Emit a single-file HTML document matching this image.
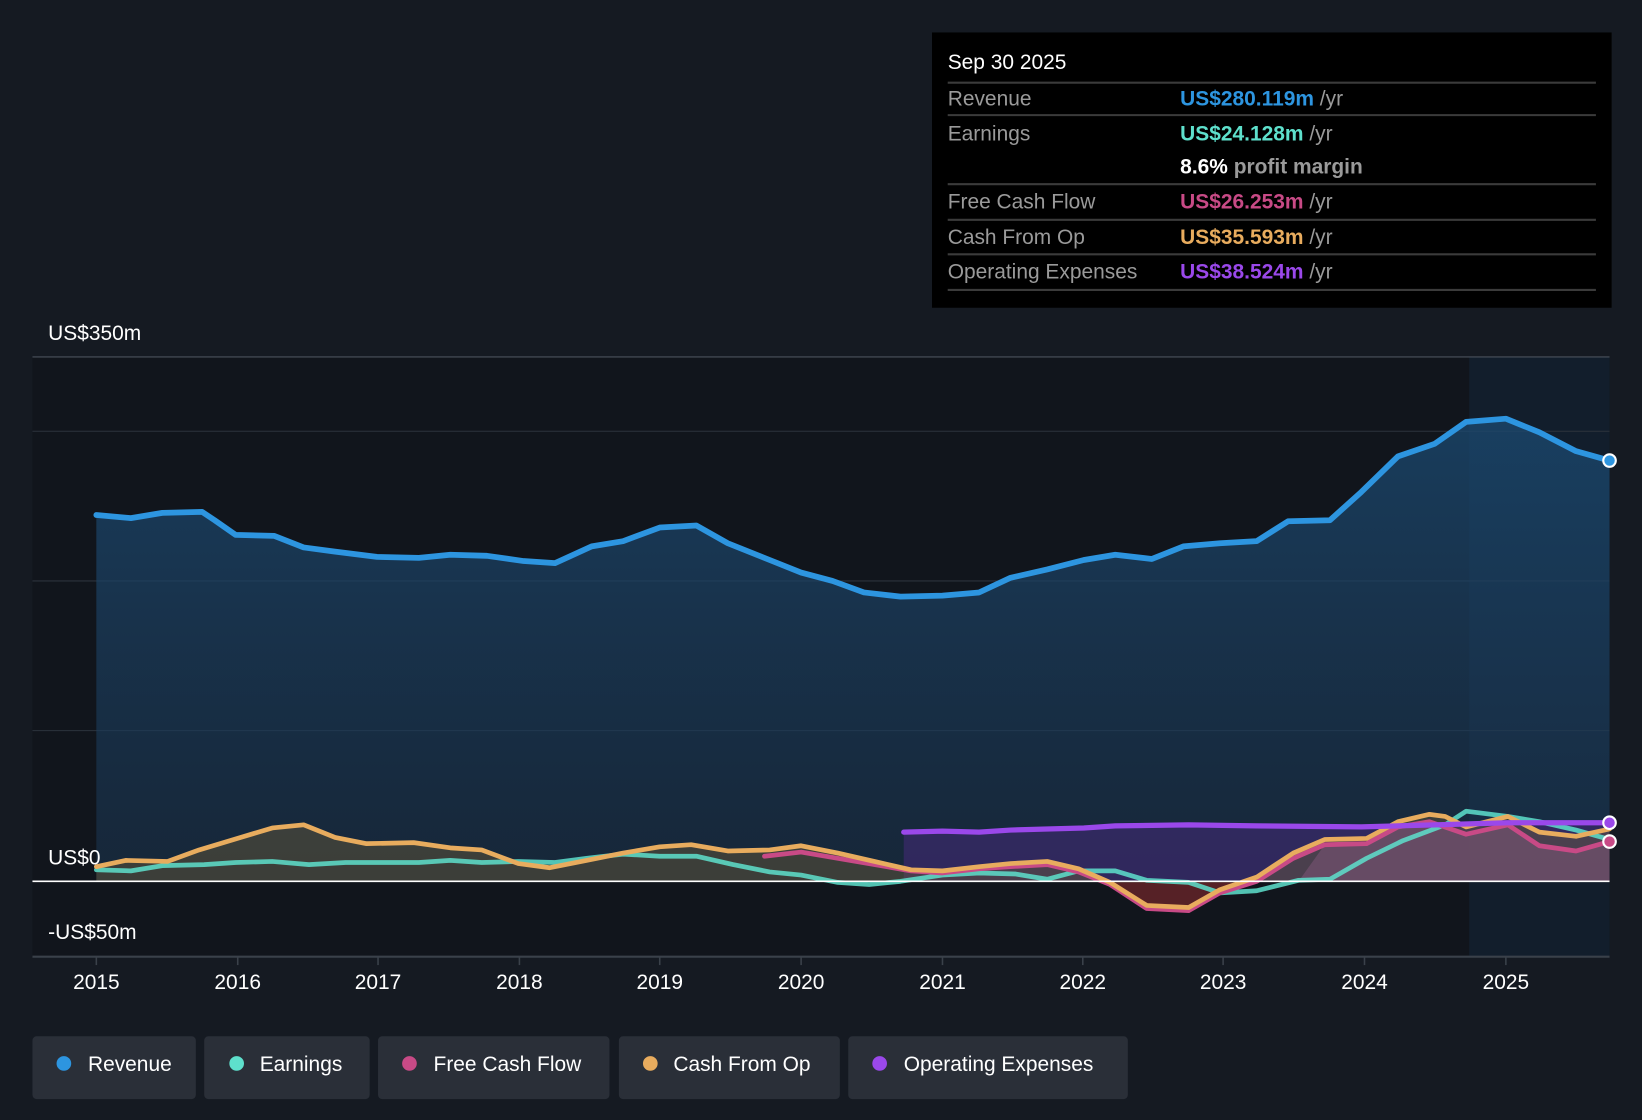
<!DOCTYPE html>
<html><head><meta charset="utf-8">
<style>
html,body{margin:0;padding:0;background:#151a22;}
svg{display:block;}
text{font-family:"Liberation Sans",sans-serif;}
</style></head>
<body>
<svg width="1642" height="1120" viewBox="0 0 1568 1070" preserveAspectRatio="none" xmlns="http://www.w3.org/2000/svg">
<defs>
<linearGradient id="rg" x1="0" y1="0" x2="0" y2="1">
<stop offset="0" stop-color="#1b4a72" stop-opacity="0.75"/>
<stop offset="1" stop-color="#1b3550" stop-opacity="0.55"/>
</linearGradient>
</defs>
<rect width="1568" height="1070" fill="#151a22"/>
<rect x="31" y="341" width="1506" height="573" fill="#11151c"/>
<rect x="1403" y="341" width="134" height="573" fill="#13283c" opacity="0.5"/>
<g stroke="#2c333d" stroke-width="1">
<line x1="31" y1="341" x2="1537" y2="341" stroke="#4a525c"/>
<line x1="31" y1="412" x2="1537" y2="412"/>
<line x1="31" y1="555" x2="1537" y2="555"/>
<line x1="31" y1="698" x2="1537" y2="698"/>
</g>
<line x1="31" y1="914" x2="1537" y2="914" stroke="#3a414a" stroke-width="2"/>

<path d="M92,492 L125,495 155,490 193,489 205,497 225,511 262,512 290,523 320,527 360,532 400,533 430,530 465,531 500,536 530,538 565,522 595,517 630,504 665,502 695,519 735,535 765,547 795,555 825,566 860,570 900,569 935,566 965,552 1000,544 1035,535 1065,530 1100,534 1130,522 1165,519 1200,517 1230,498 1270,497 1300,470 1335,436 1370,424 1400,403 1438,400 1470,413 1505,431 1537,440 L1537,842 L92,842Z" fill="url(#rg)"/>
<path d="M863,795 L900,794 935,795 965,793 1000,792 1035,791 1065,789 1135,788 1200,789 1300,790 1370,788 1440,786 1537,786 L1537,842 L863,842Z" fill="#3a2a6a" opacity="0.75"/>
<path d="M92,828 L120,822 160,823 190,812 230,800 260,791 290,788 320,800 350,806 395,805 430,810 460,812 495,825 525,829 560,822 595,815 630,809 660,807 695,813 735,812 765,808 800,815 835,823 870,831 900,832 935,828 965,825 1000,823 1030,830 1060,843 1095,865 1135,867 1165,850 1200,838 1235,815 1265,802 1305,801 1335,785 1365,778 1380,780 1400,790 1440,780 1470,795 1505,799 1537,792 L1537,842 L92,842Z" fill="#6b5a3a" opacity="0.45"/>
<path d="M1060,843 L1095,865 1135,867 1165,850 1180,843Z" fill="#5a1f26" opacity="0.9"/>
<path d="M1240,842 L1265,807 1305,806 1335,790 1365,785 1400,797 1440,788 1470,808 1505,813 1537,804 L1537,842Z" fill="#8a5a80" opacity="0.45"/>

<g fill="none" stroke-linejoin="round" stroke-linecap="round">
<path d="M92,492 L125,495 155,490 193,489 205,497 225,511 262,512 290,523 320,527 360,532 400,533 430,530 465,531 500,536 530,538 565,522 595,517 630,504 665,502 695,519 735,535 765,547 795,555 825,566 860,570 900,569 935,566 965,552 1000,544 1035,535 1065,530 1100,534 1130,522 1165,519 1200,517 1230,498 1270,497 1300,470 1335,436 1370,424 1400,403 1438,400 1470,413 1505,431 1537,440" stroke="#2d95e0" stroke-width="5.5"/>
<path d="M92,831 L125,832 155,827 195,826 225,824 260,823 295,826 330,824 400,824 430,822 460,824 495,823 530,824 560,820 595,816 630,818 665,818 700,826 735,833 765,836 800,843 830,845 860,842 900,836 935,834 970,835 1000,840 1030,832 1065,832 1095,841 1135,843 1165,853 1200,851 1240,841 1270,840 1305,820 1340,803 1380,788 1400,775 1440,780 1470,785 1505,793 1537,802" stroke="#5ee0cc" stroke-width="4.5" opacity="0.85"/>
<path d="M730,818 L765,814 800,820 835,826 870,832 900,834 935,830 965,828 1000,826 1030,833 1060,845 1095,868 1135,870 1165,853 1200,842 1235,820 1265,807 1305,806 1335,790 1365,785 1400,797 1440,788 1470,808 1505,813 1537,804" stroke="#c84a86" stroke-width="4.5"/>
<path d="M92,828 L120,822 160,823 190,812 230,800 260,791 290,788 320,800 350,806 395,805 430,810 460,812 495,825 525,829 560,822 595,815 630,809 660,807 695,813 735,812 765,808 800,815 835,823 870,831 900,832 935,828 965,825 1000,823 1030,830 1060,843 1095,865 1135,867 1165,850 1200,838 1235,815 1265,802 1305,801 1335,785 1365,778 1380,780 1400,790 1440,780 1470,795 1505,799 1537,792" stroke="#e8ac5e" stroke-width="4.5"/>
<path d="M863,795 L900,794 935,795 965,793 1000,792 1035,791 1065,789 1135,788 1200,789 1300,790 1370,788 1440,786 1537,786" stroke="#9a48ea" stroke-width="5"/>
</g>
<line x1="31" y1="842" x2="1537" y2="842" stroke="#ffffff" stroke-width="1.5"/>
<circle cx="1537" cy="440" r="6" fill="#2d95e0" stroke="#fff" stroke-width="2"/>
<circle cx="1537" cy="786" r="6" fill="#9a48ea" stroke="#fff" stroke-width="2"/>
<circle cx="1537" cy="804" r="6" fill="#c84a86" stroke="#fff" stroke-width="2"/>

<g fill="#fff" font-size="20">
<text x="46" y="325">US$350m</text>
<text x="46" y="826">US$0</text>
<text x="46" y="897">-US$50m</text>
</g>
<g stroke="#3a414a" stroke-width="1.5">
<line x1="92" y1="914" x2="92" y2="922"/><line x1="227" y1="914" x2="227" y2="922"/><line x1="361" y1="914" x2="361" y2="922"/><line x1="496" y1="914" x2="496" y2="922"/><line x1="630" y1="914" x2="630" y2="922"/><line x1="765" y1="914" x2="765" y2="922"/><line x1="900" y1="914" x2="900" y2="922"/><line x1="1034" y1="914" x2="1034" y2="922"/><line x1="1168" y1="914" x2="1168" y2="922"/><line x1="1303" y1="914" x2="1303" y2="922"/><line x1="1438" y1="914" x2="1438" y2="922"/>
</g>
<g fill="#fff" font-size="20" text-anchor="middle">
<text x="92" y="945">2015</text><text x="227" y="945">2016</text><text x="361" y="945">2017</text><text x="496" y="945">2018</text><text x="630" y="945">2019</text><text x="765" y="945">2020</text><text x="900" y="945">2021</text><text x="1034" y="945">2022</text><text x="1168" y="945">2023</text><text x="1303" y="945">2024</text><text x="1438" y="945">2025</text>
</g>

<rect x="890" y="31" width="649" height="263" fill="#000"/>
<g stroke="#3b3b3b" stroke-width="2">
<line x1="905" y1="79" x2="1524" y2="79"/><line x1="905" y1="110" x2="1524" y2="110"/><line x1="905" y1="176" x2="1524" y2="176"/><line x1="905" y1="210" x2="1524" y2="210"/><line x1="905" y1="243" x2="1524" y2="243"/><line x1="905" y1="277" x2="1524" y2="277"/>
</g>
<g font-size="20">
<text x="905" y="66" fill="#fff">Sep 30 2025</text>
<text x="905" y="101" fill="#9a9a9a">Revenue</text>
<text x="1127" y="101" fill="#2d95e0" font-weight="bold">US$280.119m <tspan fill="#9a9a9a" font-weight="normal">/yr</tspan></text>
<text x="905" y="134" fill="#9a9a9a">Earnings</text>
<text x="1127" y="134" fill="#5ee0cc" font-weight="bold">US$24.128m <tspan fill="#9a9a9a" font-weight="normal">/yr</tspan></text>
<text x="1127" y="166" fill="#fff" font-weight="bold">8.6% <tspan fill="#9a9a9a">profit margin</tspan></text>
<text x="905" y="199" fill="#9a9a9a">Free Cash Flow</text>
<text x="1127" y="199" fill="#c84a86" font-weight="bold">US$26.253m <tspan fill="#9a9a9a" font-weight="normal">/yr</tspan></text>
<text x="905" y="233" fill="#9a9a9a">Cash From Op</text>
<text x="1127" y="233" fill="#e8ac5e" font-weight="bold">US$35.593m <tspan fill="#9a9a9a" font-weight="normal">/yr</tspan></text>
<text x="905" y="266" fill="#9a9a9a">Operating Expenses</text>
<text x="1127" y="266" fill="#9a48ea" font-weight="bold">US$38.524m <tspan fill="#9a9a9a" font-weight="normal">/yr</tspan></text>
</g>

<g fill="#2a2f38">
<rect x="31" y="990" width="156" height="60" rx="4"/>
<rect x="195" y="990" width="158" height="60" rx="4"/>
<rect x="361" y="990" width="221" height="60" rx="4"/>
<rect x="591" y="990" width="211" height="60" rx="4"/>
<rect x="810" y="990" width="267" height="60" rx="4"/>
</g>
<circle cx="61" cy="1016" r="7" fill="#2d95e0"/>
<circle cx="226" cy="1016" r="7" fill="#5ee0cc"/>
<circle cx="391" cy="1016" r="7" fill="#c84a86"/>
<circle cx="621" cy="1016" r="7" fill="#e8ac5e"/>
<circle cx="840" cy="1016" r="7" fill="#9a48ea"/>
<g fill="#fff" font-size="20">
<text x="84" y="1023">Revenue</text>
<text x="248" y="1023">Earnings</text>
<text x="414" y="1023">Free Cash Flow</text>
<text x="643" y="1023">Cash From Op</text>
<text x="863" y="1023">Operating Expenses</text>
</g>
</svg>
</body></html>
